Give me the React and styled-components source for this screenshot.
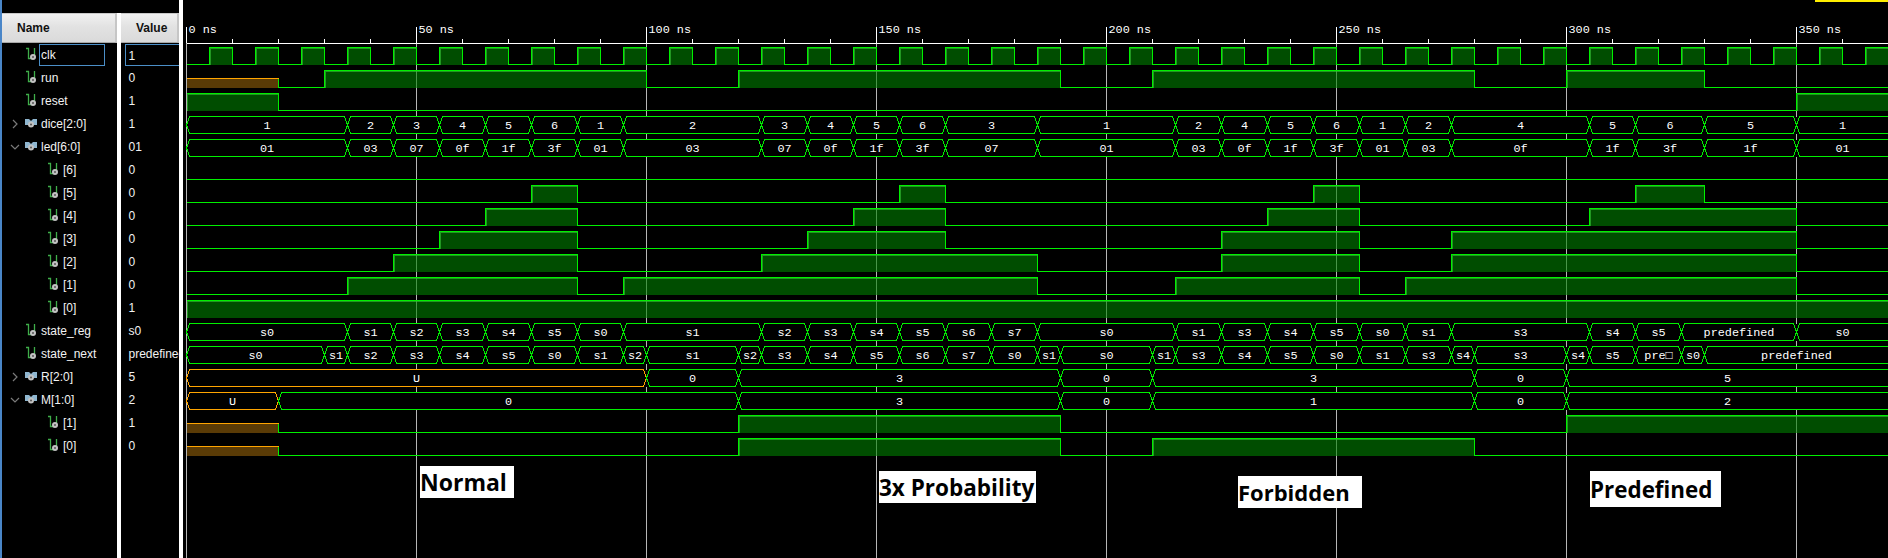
import React from "react";
import styled, { createGlobalStyle } from "styled-components";

const END = 370;
const ROW_H = 23;
const x = (t) => 3.5 + t * 4.6;
const highY = (row) => 47.5 + row * ROW_H;
const lowY = (row) => 64.5 + row * ROW_H;
const midY = (row) => 56 + row * ROW_H;

const seq = (items) => items.map(([label, t0, t1]) => ({ label, t0, t1 }));

const clockHighs = [];
for (let t = 5; t < END; t += 10) clockHighs.push([t, Math.min(t + 5, END)]);

const signals = [
  { name: "clk", value: "1", kind: "bit", highs: clockHighs, selected: true },
  { name: "run", value: "0", kind: "bit", unknownUntil: 20, highs: [[30, 100], [120, 190], [210, 280], [300, 330]] },
  { name: "reset", value: "1", kind: "bit", highs: [[0, 20], [350, END]] },
  {
    name: "dice[2:0]", value: "1", kind: "bus", expander: "closed",
    segs: seq([["1",0,35],["2",35,45],["3",45,55],["4",55,65],["5",65,75],["6",75,85],["1",85,95],["2",95,125],["3",125,135],["4",135,145],["5",145,155],["6",155,165],["3",165,185],["1",185,215],["2",215,225],["4",225,235],["5",235,245],["6",245,255],["1",255,265],["2",265,275],["4",275,305],["5",305,315],["6",315,330],["5",330,350],["1",350,END]]),
  },
  {
    name: "led[6:0]", value: "01", kind: "bus", expander: "open",
    segs: seq([["01",0,35],["03",35,45],["07",45,55],["0f",55,65],["1f",65,75],["3f",75,85],["01",85,95],["03",95,125],["07",125,135],["0f",135,145],["1f",145,155],["3f",155,165],["07",165,185],["01",185,215],["03",215,225],["0f",225,235],["1f",235,245],["3f",245,255],["01",255,265],["03",265,275],["0f",275,305],["1f",305,315],["3f",315,330],["1f",330,350],["01",350,END]]),
  },
  { name: "[6]", value: "0", kind: "bit", depth: 1, highs: [] },
  { name: "[5]", value: "0", kind: "bit", depth: 1, highs: [[75, 85], [155, 165], [245, 255], [315, 330]] },
  { name: "[4]", value: "0", kind: "bit", depth: 1, highs: [[65, 85], [145, 165], [235, 255], [305, 350]] },
  { name: "[3]", value: "0", kind: "bit", depth: 1, highs: [[55, 85], [135, 165], [225, 255], [275, 350]] },
  { name: "[2]", value: "0", kind: "bit", depth: 1, highs: [[45, 85], [125, 185], [225, 255], [275, 350]] },
  { name: "[1]", value: "0", kind: "bit", depth: 1, highs: [[35, 85], [95, 185], [215, 255], [265, 350]] },
  { name: "[0]", value: "1", kind: "bit", depth: 1, highs: [[0, END]] },
  {
    name: "state_reg", value: "s0", kind: "bus", icon: "bit",
    segs: seq([["s0",0,35],["s1",35,45],["s2",45,55],["s3",55,65],["s4",65,75],["s5",75,85],["s0",85,95],["s1",95,125],["s2",125,135],["s3",135,145],["s4",145,155],["s5",155,165],["s6",165,175],["s7",175,185],["s0",185,215],["s1",215,225],["s3",225,235],["s4",235,245],["s5",245,255],["s0",255,265],["s1",265,275],["s3",275,305],["s4",305,315],["s5",315,325],["predefined",325,350],["s0",350,END]]),
  },
  {
    name: "state_next", value: "predefined", kind: "bus", icon: "bit",
    segs: seq([["s0",0,30],["s1",30,35],["s2",35,45],["s3",45,55],["s4",55,65],["s5",65,75],["s0",75,85],["s1",85,95],["s2",95,100],["s1",100,120],["s2",120,125],["s3",125,135],["s4",135,145],["s5",145,155],["s6",155,165],["s7",165,175],["s0",175,185],["s1",185,190],["s0",190,210],["s1",210,215],["s3",215,225],["s4",225,235],["s5",235,245],["s0",245,255],["s1",255,265],["s3",265,275],["s4",275,280],["s3",280,300],["s4",300,305],["s5",305,315],["pre\u25a1",315,325],["s0",325,330],["predefined",330,END]]),
  },
  {
    name: "R[2:0]", value: "5", kind: "bus", expander: "closed",
    segs: seq([["U",0,100],["0",100,120],["3",120,190],["0",190,210],["3",210,280],["0",280,300],["5",300,END]]),
  },
  {
    name: "M[1:0]", value: "2", kind: "bus", expander: "open",
    segs: seq([["U",0,20],["0",20,120],["3",120,190],["0",190,210],["1",210,280],["0",280,300],["2",300,END]]),
  },
  { name: "[1]", value: "1", kind: "bit", depth: 1, unknownUntil: 20, highs: [[120, 190], [300, END]] },
  { name: "[0]", value: "0", kind: "bit", depth: 1, unknownUntil: 20, highs: [[120, 190], [210, 280]] },
];

const notes = [
  { text: "Normal", left: 237, top: 466, width: 94, height: 32, size: 23 },
  { text: "3x Probability", left: 696, top: 471, width: 157, height: 32, size: 22.5 },
  { text: "Forbidden", left: 1055, top: 476, width: 124, height: 32, size: 22 },
  { text: "Predefined", left: 1407, top: 471, width: 131, height: 36, size: 22.4 },
];

const GlobalStyle = createGlobalStyle`
  html, body {
    margin: 0;
    padding: 0;
    background: #000;
  }
`;

const Page = styled.div`
  display: flex;
  width: 1888px;
  height: 558px;
  overflow: hidden;
  background: #000;
  color: #f2f2f2;
  font-family: "Liberation Sans", Arial, sans-serif;
  font-size: 12px;
`;

const Column = styled.div`
  display: flex;
  flex-direction: column;
  flex: none;
  width: ${(p) => p.$width}px;
  padding-top: 13px;
  box-sizing: border-box;
  background: #000;
  border-left: ${(p) => (p.$strip ? "2px solid #4a86c8" : "none")};
`;

const Divider = styled.div`
  flex: none;
  width: 4px;
  height: 100%;
  display: flex;
  flex-direction: column;
  &::before {
    content: "";
    height: ${(p) => p.$gap}px;
    background: #000;
  }
  &::after {
    content: "";
    flex: 1;
    background: #fff;
  }
`;

const HeaderCell = styled.div`
  height: 30px;
  box-sizing: border-box;
  display: flex;
  align-items: center;
  padding-left: ${(p) => p.$pad}px;
  color: #111;
  font-weight: 700;
  font-size: 12px;
  background: linear-gradient(#f1f1f1, #e2e2e2 45%, #dadada);
  border-top: 1px solid #c9c9c9;
  border-right: 2px solid #c6c6c6;
  border-bottom: 1px solid #a8a8a8;
`;

const NameRow = styled.div`
  height: ${ROW_H}px;
  display: flex;
  align-items: center;
  padding-left: ${(p) => 8 + p.$depth * 22}px;
  box-sizing: border-box;
`;

const ChevronSlot = styled.span`
  flex: none;
  width: 15px;
  height: 10px;
  display: flex;
`;

const IconSlot = styled.svg`
  flex: none;
  width: 12px;
  height: ${ROW_H}px;
  margin-right: 2px;
`;

const NameLabel = styled.span`
  width: ${(p) => (p.$selected ? "66px" : "auto")};
  height: 22px;
  line-height: 22px;
  padding-left: 2px;
  box-sizing: border-box;
  white-space: nowrap;
  box-shadow: ${(p) => (p.$selected ? "inset 0 0 0 1px #4b8fc8" : "none")};
`;

const ValueRow = styled.div`
  height: ${ROW_H}px;
  display: flex;
  align-items: center;
  padding-left: 4px;
  box-sizing: border-box;
  overflow: hidden;
`;

const ValueLabel = styled.span`
  flex: 1;
  height: 22px;
  line-height: 22px;
  padding-left: 3.5px;
  white-space: nowrap;
  overflow: hidden;
  border: ${(p) => (p.$selected ? "1px solid #4b8fc8" : "none")};
  border-right: none;
  box-sizing: border-box;
  text-indent: ${(p) => (p.$selected ? "-1px" : "0")};
`;

const WavePanel = styled.div`
  position: relative;
  flex: 1;
  height: 100%;
  background: #000;
  overflow: hidden;
`;

const WaveSvg = styled.svg`
  display: block;
  shape-rendering: crispEdges;
`;

const Trace = styled.polyline`
  fill: none;
  stroke: ${(p) => (p.$unknown ? "#ffa500" : "#00f000")};
  stroke-width: 1;
`;

const Shape = styled.polygon`
  fill: none;
  stroke: ${(p) => (p.$unknown ? "#ffa500" : "#00f000")};
  stroke-width: 1;
`;

const BusBackdrop = styled.rect`
  fill: #000;
`;

const HighFill = styled.rect`
  fill: ${(p) => (p.$unknown ? "#5a3b06" : "rgba(0, 128, 0, 0.6)")};
`;

const Bevel = styled.polyline`
  fill: none;
  stroke: rgba(50, 190, 50, 0.65);
  stroke-width: 1;
`;

const GridLine = styled.line`
  stroke: #b6b6b6;
  stroke-width: 1;
`;

const AxisLine = styled.line`
  stroke: #fff;
  stroke-width: 1;
`;

const WaveText = styled.text`
  fill: #fff;
  font-family: "Liberation Mono", "Courier New", monospace;
  font-size: 11.8px;
  shape-rendering: auto;
  text-anchor: ${(p) => p.$anchor || "middle"};
`;

const Note = styled.div`
  position: absolute;
  left: ${(p) => p.$left}px;
  top: ${(p) => p.$top}px;
  width: ${(p) => p.$width}px;
  height: ${(p) => p.$height}px;
  background: #fff;
  color: #000;
  display: flex;
  align-items: center;
  font-family: "Open Sans", sans-serif;
  font-weight: 700;
  font-size: ${(p) => p.$size}px;
  white-space: nowrap;
  overflow: hidden;
`;

const YellowEdge = styled.div`
  position: absolute;
  right: 0;
  top: 0;
  width: 73px;
  height: 2px;
  background: #ffee00;
`;

const Chevron = ({ open }) => (
  <svg width="10" height="10" viewBox="0 0 10 10" fill="none" stroke="#7a7a7a" strokeWidth="1.2">
    {open ? <path d="M1 3 L5 7 L9 3" /> : <path d="M3 1 L7 5 L3 9" />}
  </svg>
);

const Gear = ({ cx, cy }) => (
  <g>
    <circle cx={cx} cy={cy} r="3" fill="#c2c2c2" />
    <circle cx={cx} cy={cy} r="1" fill="#555" />
  </g>
);

const BitIcon = () => (
  <IconSlot viewBox={`0 0 12 ${ROW_H}`}>
    <path d="M1 5.5 H3.5 V15.5 H6.5 M9.5 5 V12" fill="none" stroke="#3fae4a" strokeWidth="1.3" />
    <Gear cx={8} cy={14} />
  </IconSlot>
);

const BusIcon = () => (
  <IconSlot viewBox={`0 0 12 ${ROW_H}`}>
    <path d="M0 7 H4 L6 9 L8 7 H12 V13 H0 Z" fill="#8fb6cf" />
    <Gear cx={6} cy={12.5} />
  </IconSlot>
);

const BitWave = ({ row, highs, unknownUntil = 0 }) => {
  const low = lowY(row);
  const high = highY(row);
  const points = [];
  let t = unknownUntil;
  if (unknownUntil) points.push([x(t), midY(row) - 0.5]);
  highs.forEach(([a, b]) => {
    if (a > t) points.push([x(t), low], [x(a), low]);
    points.push([x(a), high], [x(b), high]);
    if (b < END) points.push([x(b), low]);
    t = b;
  });
  if (t < END) points.push([x(t), low], [x(END), low]);

  return (
    <g>
      {unknownUntil > 0 && (
        <>
          <HighFill $unknown x={x(0)} y={midY(row)} width={x(unknownUntil) - x(0)} height={low - midY(row) + 0.5} />
          <Trace $unknown points={`${x(0)},${midY(row) - 0.5} ${x(unknownUntil)},${midY(row) - 0.5}`} />
        </>
      )}
      {highs.map(([a, b]) => (
        <g key={a}>
          <HighFill x={x(a)} y={high} width={x(b) - x(a)} height={low - high + 0.5} />
          <Bevel points={`${x(a) + 1},${low} ${x(a) + 1},${high + 1} ${x(b) - 1},${high + 1}`} />
        </g>
      ))}
      <Trace points={points.map((p) => p.join(",")).join(" ")} />
    </g>
  );
};

const BusWave = ({ row, segs }) => {
  const top = highY(row);
  const bottom = lowY(row);
  const mid = midY(row);
  return (
    <g>
      <BusBackdrop x={x(0)} y={top} width={x(END) - x(0) + 5} height={bottom - top} />
      {segs.map((s) => {
        const x0 = x(s.t0);
        const x1 = x(s.t1);
        const tail = s.t1 === END ? [[x1 + 5, top], [x1 + 5, bottom]] : [[x1 - 3, top], [x1, mid], [x1 - 3, bottom]];
        const pts = [[x0, mid], [x0 + 3, top], ...tail, [x0 + 3, bottom]];
        return (
          <g key={s.t0}>
            <Shape $unknown={s.label === "U"} points={pts.map((p) => p.join(",")).join(" ")} />
            <WaveText x={(x0 + x1) / 2} y={mid + 3.5}>{s.label}</WaveText>
          </g>
        );
      })}
    </g>
  );
};

const Timeline = () => {
  const ticks = [];
  for (let t = 0; t <= END; t += 10) ticks.push(t);
  return (
    <g>
      {ticks.filter((t) => t % 50 === 0).map((t) => (
        <g key={t}>
          <GridLine x1={x(t)} x2={x(t)} y1={43} y2={558} />
          <AxisLine x1={x(t)} x2={x(t)} y1={27} y2={43} />
          <WaveText $anchor="start" x={x(t) + 2} y={33}>{t} ns</WaveText>
        </g>
      ))}
      {ticks.filter((t) => t % 50 !== 0).map((t) => (
        <AxisLine key={t} x1={x(t)} x2={x(t)} y1={39} y2={43} />
      ))}
      <AxisLine x1={x(0)} x2={1705} y1={43.5} y2={43.5} />
    </g>
  );
};

export default function App() {
  return (
    <Page>
      <GlobalStyle />
      <Column $width={117} $strip>
        <HeaderCell $pad={15}>Name</HeaderCell>
        {signals.map((s, i) => (
          <NameRow key={i} $depth={s.depth || 0}>
            <ChevronSlot>{s.expander && <Chevron open={s.expander === "open"} />}</ChevronSlot>
            {s.kind === "bit" || s.icon === "bit" ? <BitIcon /> : <BusIcon />}
            <NameLabel $selected={s.selected}>{s.name}</NameLabel>
          </NameRow>
        ))}
      </Column>
      <Divider $gap={13} />
      <Column $width={58}>
        <HeaderCell $pad={15}>Value</HeaderCell>
        {signals.map((s, i) => (
          <ValueRow key={i}>
            <ValueLabel $selected={s.selected}>{s.value}</ValueLabel>
          </ValueRow>
        ))}
      </Column>
      <Divider $gap={0} />
      <WavePanel>
        <WaveSvg width="1705" height="558" viewBox="0 0 1705 558">
          <Timeline />
          {signals.map((s, i) =>
            s.kind === "bit" ? (
              <BitWave key={i} row={i} highs={s.highs} unknownUntil={s.unknownUntil} />
            ) : (
              <BusWave key={i} row={i} segs={s.segs} />
            )
          )}
        </WaveSvg>
        {notes.map((n) => (
          <Note key={n.text} $left={n.left} $top={n.top} $width={n.width} $height={n.height} $size={n.size}>
            {n.text}
          </Note>
        ))}
        <YellowEdge />
      </WavePanel>
    </Page>
  );
}
